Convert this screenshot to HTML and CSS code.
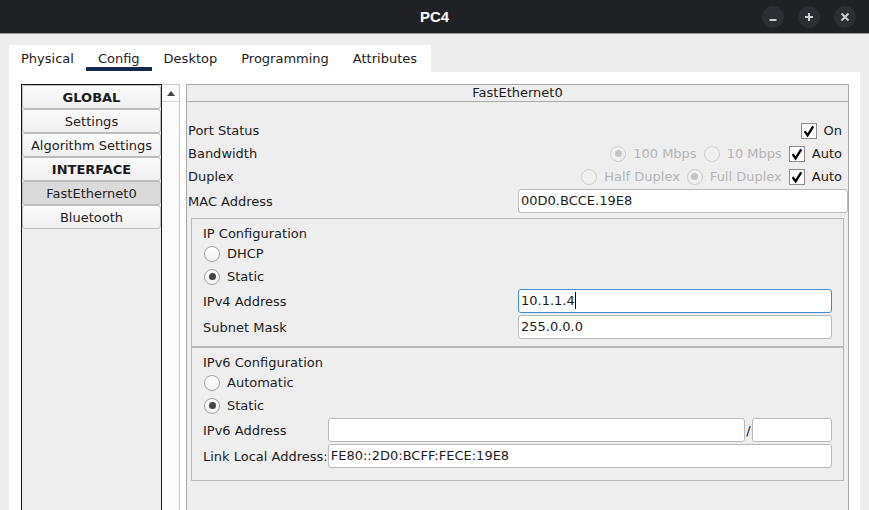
FILE: index.html
```html
<!DOCTYPE html>
<html lang="en">
<head>
<meta charset="utf-8">
<title>PC4</title>
<link rel="stylesheet" href="styles.css">
</head>
<body>
<header class="titlebar">
  <div class="tb-spacer"></div>
  <div class="tb-title">PC4</div>
  <div class="tb-buttons">
    <span class="wbtn"><svg viewBox="0 0 22 22" width="22" height="22"><path d="M7.5 14h7"/></svg></span>
    <span class="wbtn"><svg viewBox="0 0 22 22" width="22" height="22"><path d="M7 11h8M11 7v8"/></svg></span>
    <span class="wbtn"><svg viewBox="0 0 22 22" width="22" height="22"><path d="M7.5 7.5l7 7M14.5 7.5l-7 7"/></svg></span>
  </div>
</header>
<div class="main">
  <nav class="tabs">
    <span class="tab">Physical</span>
    <span class="tab active">Config</span>
    <span class="tab">Desktop</span>
    <span class="tab">Programming</span>
    <span class="tab">Attributes</span>
  </nav>
  <div class="content">
    <div class="list">
      <div class="item head">GLOBAL</div>
      <div class="item">Settings</div>
      <div class="item">Algorithm Settings</div>
      <div class="item head">INTERFACE</div>
      <div class="item sel">FastEthernet0</div>
      <div class="item">Bluetooth</div>
    </div>
    <div class="scroll"><div class="scroll-btn"><span class="arrow-up"></span></div></div>
    <section class="panel">
      <div class="panel-head">FastEthernet0</div>
      <div class="panel-body">
        <div class="row">
          <span class="label">Port Status</span>
          <div class="ctrls">
            <span class="check"><svg viewBox="0 0 14 14" width="14" height="14"><path d="M2.6 7.2l3 4.2 5.6-9"/></svg></span>
            <span>On</span>
          </div>
        </div>
        <div class="row">
          <span class="label">Bandwidth</span>
          <div class="ctrls">
            <span class="radio dis on"></span><span class="dis-text">100 Mbps</span>
            <span class="radio dis"></span><span class="dis-text">10 Mbps</span>
            <span class="check"><svg viewBox="0 0 14 14" width="14" height="14"><path d="M2.6 7.2l3 4.2 5.6-9"/></svg></span>
            <span>Auto</span>
          </div>
        </div>
        <div class="row">
          <span class="label">Duplex</span>
          <div class="ctrls">
            <span class="radio dis"></span><span class="dis-text">Half Duplex</span>
            <span class="radio dis on"></span><span class="dis-text">Full Duplex</span>
            <span class="check"><svg viewBox="0 0 14 14" width="14" height="14"><path d="M2.6 7.2l3 4.2 5.6-9"/></svg></span>
            <span>Auto</span>
          </div>
        </div>
        <div class="row mac-row">
          <span class="label">MAC Address</span>
          <div class="input mac">00D0.BCCE.19E8</div>
        </div>

        <div class="group ip">
          <div class="gtitle">IP Configuration</div>
          <div class="radio-row"><span class="radio"></span><span>DHCP</span></div>
          <div class="radio-row"><span class="radio on"></span><span>Static</span></div>
          <div class="field">
            <span class="label">IPv4 Address</span>
            <div class="input ipin focus">10.1.1.4<span class="caret"></span></div>
          </div>
          <div class="field">
            <span class="label">Subnet Mask</span>
            <div class="input ipin">255.0.0.0</div>
          </div>
        </div>

        <div class="group v6">
          <div class="gtitle">IPv6 Configuration</div>
          <div class="radio-row"><span class="radio"></span><span>Automatic</span></div>
          <div class="radio-row"><span class="radio on"></span><span>Static</span></div>
          <div class="v6grid">
            <span class="v6label">IPv6 Address</span>
            <div class="v6addr">
              <div class="input v6big"></div>
              <span class="slash">/</span>
              <div class="input v6pre"></div>
            </div>
            <span class="v6label">Link Local Address:</span>
            <div class="v6addr">
              <div class="input v6big">FE80::2D0:BCFF:FECE:19E8</div>
            </div>
          </div>
        </div>
      </div>
    </section>
  </div>
</div>
</body>
</html>
```
FILE: styles.css
```css
* { box-sizing: border-box; }
html, body { height: 100%; }
body {
  margin: 0;
  background: #ededed;
  font-family: "DejaVu Sans", sans-serif;
  font-size: 13px;
  color: #1c1c1c;
  overflow: hidden;
  display: flex;
  flex-direction: column;
}

/* title bar */
.titlebar {
  flex: none;
  height: 34px;
  background: #1f2125;
  border-bottom: 1px solid #9c9c9c;
  display: grid;
  grid-template-columns: 1fr auto 1fr;
  align-items: center;
}
.tb-title {
  color: #ffffff;
  font-family: "Liberation Sans", sans-serif;
  font-weight: bold;
  font-size: 15px;
}
.tb-buttons {
  display: flex;
  justify-content: flex-end;
  gap: 14px;
  padding-right: 13px;
}
.wbtn {
  width: 22px;
  height: 22px;
  border-radius: 50%;
  background: #2c2e33;
  display: flex;
}
.wbtn svg { stroke: #cdcdcd; stroke-width: 2; fill: none; }

/* main area */
.main {
  flex: 1;
  min-height: 0;
  display: flex;
  flex-direction: column;
  padding: 11px 9px 0 9px;
}
.tabs {
  flex: none;
  width: 422px;
  height: 27px;
  background: #ffffff;
  display: flex;
  align-items: flex-start;
}
.tab {
  height: 26px;
  padding: 5px 12px 0;
  line-height: 17px;
  border-bottom: 4px solid transparent;
  white-space: nowrap;
}
.tab.active { border-bottom-color: #14284b; }

.content {
  flex: 1;
  min-height: 0;
  background: #ffffff;
  display: flex;
  align-items: stretch;
  padding: 12px 11px 0 12px;
}

/* left list */
.list {
  flex: none;
  width: 141px;
  border: 1px solid #161616;
  border-bottom: 0;
  background: #eeeeee;
}
.item {
  height: 24px;
  line-height: 21px;
  padding-top: 1px;
  border: 1px solid #bdbdbd;
  border-radius: 3px;
  background: linear-gradient(#fbfbfb, #f0f0f0);
  text-align: center;
  white-space: nowrap;
}
.item.head { font-weight: bold; }
.item.sel { background: #dadada; }

.scroll {
  flex: none;
  width: 18px;
  margin-right: 6px;
  border-top: 1px solid #c8c8c8;
  border-right: 1px solid #c8c8c8;
  background: #fbfbfb;
}
.scroll-btn {
  height: 17px;
  border-bottom: 1px solid #d6d6d6;
  display: flex;
  align-items: center;
  justify-content: center;
}
.arrow-up {
  width: 0;
  height: 0;
  border-left: 4px solid transparent;
  border-right: 4px solid transparent;
  border-bottom: 5px solid #444444;
}

/* right panel */
.panel {
  flex: 1;
  border: 1px solid #aaaaaa;
  border-bottom: 0;
  background: #eeeeee;
}
.panel-head {
  height: 17px;
  line-height: 16px;
  border-bottom: 1px solid #aaaaaa;
  text-align: center;
}
.panel-body { padding: 17px 0 0 1px; }

.row {
  height: 23px;
  display: flex;
  align-items: center;
}
.label { flex: 1; white-space: nowrap; }
.ctrls {
  display: flex;
  align-items: center;
  gap: 7px;
  margin-right: 6px;
  white-space: nowrap;
}
.dis-text { color: #b4b4b4; }

.check {
  width: 16px;
  height: 16px;
  border: 1px solid #8c8c8c;
  background: #ffffff;
  display: flex;
  flex: none;
}
.check svg { fill: none; stroke: #000000; stroke-width: 2.3; }

.radio {
  flex: none;
  width: 16px;
  height: 16px;
  border-radius: 50%;
  border: 1px solid #a3a3a3;
  background: linear-gradient(#ffffff, #f1f1f1);
  display: flex;
  align-items: center;
  justify-content: center;
}
.radio.on::after {
  content: "";
  width: 7px;
  height: 7px;
  border-radius: 50%;
  background: #444444;
}
.radio.dis { border-color: #cdcdcd; background: #f0f0f0; }
.radio.dis.on::after { background: #c4c4c4; }

.input {
  height: 24px;
  line-height: 22px;
  background: #ffffff;
  border: 1px solid #b9b9b9;
  border-radius: 3px;
  padding: 0 2px;
  white-space: nowrap;
  overflow: hidden;
}
.input.focus { border-color: #3c8fce; }
.caret {
  display: inline-block;
  width: 1px;
  height: 17px;
  background: #000000;
  vertical-align: middle;
  margin-top: -3px;
}
.mac-row { height: 24px; margin-top: 1px; }
.mac { width: 330px; }

/* groups */
.group {
  margin: 0 4px 0 3px;
  border: 1px solid #b8b8b8;
}
.group.ip { margin-top: 5px; padding: 6px 11px 6px; }
.group.v6 { padding: 6px 11px 11px; }
.gtitle { line-height: 17px; }
.radio-row {
  height: 23px;
  display: flex;
  align-items: center;
  gap: 7px;
  padding-left: 1px;
}
.field {
  height: 26px;
  display: flex;
  align-items: center;
}
.ipin { width: 314px; }

.v6grid {
  display: grid;
  grid-template-columns: auto 1fr;
  grid-auto-rows: 26px;
  align-items: center;
}
.v6label { white-space: nowrap; }
.v6addr { display: flex; align-items: center; }
.v6big { flex: 1; }
.slash { width: 7px; text-align: center; }
.v6pre { width: 80px; }
```
